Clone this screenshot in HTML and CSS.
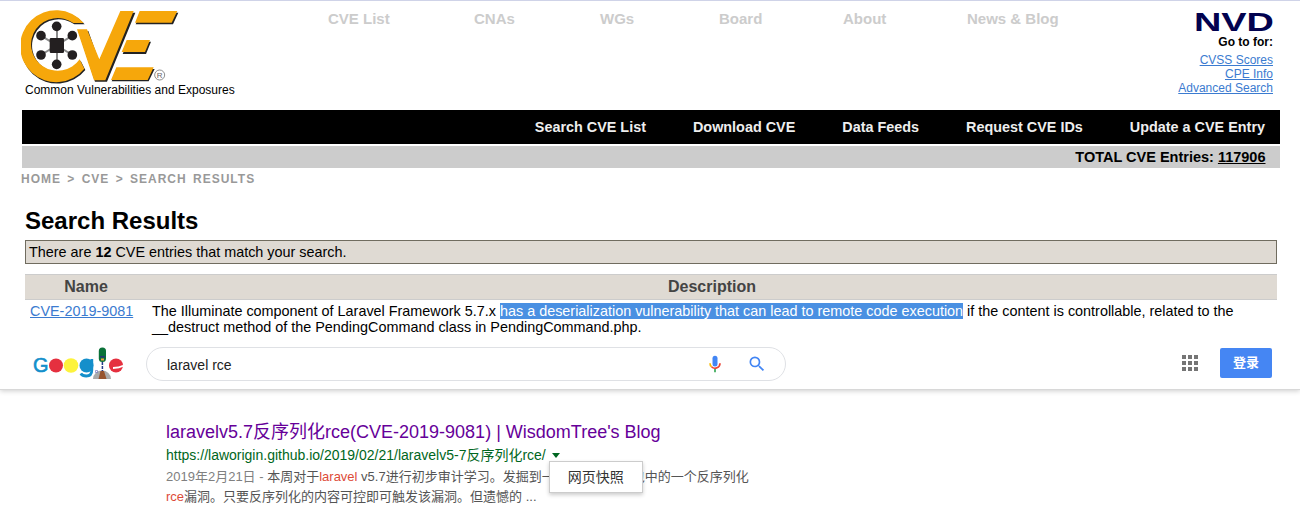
FILE: index.html
```html
<!DOCTYPE html>
<html lang="zh-CN">
<head>
<meta charset="utf-8">
<title>CVE Search Results</title>
<link rel="stylesheet" href="styles.css">
</head>
<body>
<header class="site-header">
  <div class="brand">
    <svg class="cve-logo" viewBox="18 24 474 228" role="img" aria-label="CVE">
      <path d="M205 69 A108 108 0 1 0 207 206 L193 178 A80 79 0 1 1 174 69Z" fill="#222" transform="translate(4 4)"/>
      <path d="M205 69 A108 108 0 1 0 207 206 L193 178 A80 79 0 1 1 174 69Z" fill="#f6a70b" transform="translate(1 0)"/>
      <path d="M168 78 L222 78 L253 178 L240 241 L228 241Z" fill="#fff"/>
      <path d="M190 93 L220 93 L252 184 L321 38 L361 38 L276 245 L240 245Z" fill="#222"/>
      <path d="M186 88 L216 88 L253 178 L316 33 L356 33 L271 241 L237 241Z" fill="#f6a70b"/>
      <path d="M378 38h112l-16 35H362zM338 125h70l-15 37h-70zM306 207h113l-18 37H290z" fill="#222"/>
      <path d="M374 33h113l-17 35H360zM335 120h70l-15 36h-70zM304 202h112l-18 38H288z" fill="#f6a70b"/>
      <g stroke="#8b8b8b" stroke-width="6"><path d="M126 80V192M78 107L172 165M172 107L78 165"/></g>
      <g fill="#231f20"><rect x="104" y="114" width="43" height="45" rx="4"/><circle cx="125" cy="79" r="14.500"/><circle cx="78" cy="107" r="14.500"/><circle cx="172" cy="107" r="14.500"/><circle cx="78" cy="165" r="14.500"/><circle cx="172" cy="165" r="14.500"/><circle cx="125" cy="193" r="14.500"/></g>
      <circle cx="434" cy="225" r="15" fill="none" stroke="#777" stroke-width="2.500"/>
      <text class="registered" x="425" y="234">R</text>
    </svg>
    <div class="tagline">Common Vulnerabilities and Exposures</div>
  </div>
  <nav class="top-nav"><a>CVE List</a><a>CNAs</a><a>WGs</a><a>Board</a><a>About</a><a>News &amp; Blog</a></nav>
  <aside class="nvd">
    <svg class="nvd-logo" viewBox="0 0 80 20"><text class="nvd-word" x="1" y="19" textLength="80" lengthAdjust="spacingAndGlyphs">NVD</text></svg>
    <strong>Go to for:</strong>
    <a>CVSS Scores</a><a>CPE Info</a><a>Advanced Search</a>
  </aside>
</header>
<nav class="main-nav"><a>Search CVE List</a><a>Download CVE</a><a>Data Feeds</a><a>Request CVE IDs</a><a>Update a CVE Entry</a></nav>
<div class="total">TOTAL CVE Entries:&nbsp;<u>117906</u></div>
<div class="crumbs">HOME &gt; CVE &gt; SEARCH RESULTS</div>
<main class="results">
  <h1>Search Results</h1>
  <div class="count">There are <b>12</b> CVE entries that match your search.</div>
  <div class="row head"><span>Name</span><span>Description</span></div>
  <div class="row entry"><a>CVE-2019-9081</a><p>The Illuminate component of Laravel Framework 5.7.x <mark>has a deserialization vulnerability that can lead to remote code execution</mark> if the content is controllable, related to the<br>__destruct method of the PendingCommand class in PendingCommand.php.</p></div>
</main>
<section class="search-bar">
  <svg class="doodle" viewBox="0 0 96 36" role="img" aria-label="Google">
    <text class="letter" x="3" y="25" textLength="15.500" lengthAdjust="spacingAndGlyphs">G</text>
    <circle cx="26" cy="18.500" r="7" fill="#e5303f"/><circle cx="41" cy="18.500" r="7.300" fill="#fdf33c"/>
    <circle cx="56.500" cy="18.500" r="7" fill="#148fcb"/><path d="M61.800 12v11q0 6-5.500 6-4 0-5.500-2.500" fill="none" stroke="#148fcb" stroke-width="2.800"/>
    <path d="M63 32a9 8.500 0 0 1 18 0z" fill="#aaa"/><path d="M70.500 24h3.500l2.500 8h-8z" fill="#97532d"/>
    <rect x="68.800" y=".5" width="7.200" height="14.500" rx="3.500" fill="#0a7138"/><path d="M72.400 15v9" stroke="#243b88" stroke-width="1.500" stroke-dasharray="3 1"/><path d="M70 9h5v1.500h-5z" fill="#263774"/><path d="M71 11.500h3v2h-3z" fill="#f2a23b"/><path d="M65.500 23.500h2v2h-2z" fill="none" stroke="#7776bc" stroke-width=".7"/>
    <circle cx="86" cy="18.500" r="7" fill="#e5303f"/><path d="M83 21q6 0 11-2.500" fill="none" stroke="#fff" stroke-width="1.800"/>
  </svg>
  <div class="search-box">
    <span>laravel rce</span>
    <svg class="mic" viewBox="0 0 24 24"><rect x="9" y="2" width="6" height="13" rx="3" fill="#4285f4"/><path d="M6 11a6 6 0 0 0 1.800 4.300" stroke="#fbbc05"/><path d="M7.800 15.300A6 6 0 0 0 18 11" stroke="#ea4335"/><path d="M12 18v4" stroke="#34a853"/></svg>
    <svg class="lens" viewBox="0 0 24 24"><path d="M15.500 14h-.79l-.28-.27A6.471 6.471 0 0 0 16 9.500 6.500 6.500 0 1 0 9.500 16c1.610 0 3.090-.59 4.230-1.570l.27.280v.79l5 4.990L20.490 19zM9.500 14C7.010 14 5 11.990 5 9.500S7.010 5 9.500 5 14 7.010 14 9.500 11.990 14 9.500 14z" fill="#4285f4"/></svg>
  </div>
  <svg class="apps" viewBox="0 0 16 16" fill="#757575"><path d="M0 0h4v4H0zM6 0h4v4H6zM12 0h4v4h-4zM0 6h4v4H0zM6 6h4v4H6zM12 6h4v4h-4zM0 12h4v4H0zM6 12h4v4H6zM12 12h4v4h-4z"/></svg>
  <button class="login">登录</button>
</section>
<article class="hit">
  <h2>laravelv5.7反序列化rce(CVE-2019-9081) | WisdomTree's Blog</h2>
  <div class="url">https://laworigin.github.io/2019/02/21/laravelv5-7反序列化rce/<span class="menu-anchor"><i class="caret"></i><span class="menu">网页快照</span></span></div>
  <p class="snippet"><span class="date">2019年2月21日 - </span>本周对于<em>laravel</em> v5.7进行初步审计学习。发掘到一<span class="covered"></span>包中的一个反序列化<br><em>rce</em>漏洞。只要反序列化的内容可控即可触发该漏洞。但遗憾的 ...</p>
</article>
</body>
</html>
```
FILE: styles.css
```css
* { box-sizing: border-box; }
body { margin: 0; height: 507px; overflow: hidden; background: #fff; color: #000; font-family: "Liberation Sans", "Noto Sans CJK SC", sans-serif; }
.site-header { height: 110px; border-top: 1px solid #cfd3e8; display: flex; padding: 0 27px 0 21px; }
.brand { width: 307px; padding-top: 7px; }
.cve-logo { display: block; width: 158px; height: 76px; }
.registered { font-size: 24px; fill: #666; }
.tagline { font-size: 12px; line-height: 14px; margin: -1px 0 0 4px; }
.top-nav { display: grid; grid-template-columns: 146px 126px 119px 124px 124px auto; align-content: start; padding-top: 9px; font-size: 15px; line-height: 18px; font-weight: bold; color: #ccc; }
.nvd { margin-left: auto; display: flex; flex-direction: column; align-items: flex-end; font-size: 12px; line-height: 14px; padding-top: 11px; }
.nvd-logo { width: 80px; height: 20px; overflow: visible; }
.nvd-word { font-size: 25px; line-height: 20px; font-weight: bold; fill: #02024f; }
.nvd strong { margin: 3px 0 4px; }
.nvd a { color: #3b7bd0; text-decoration: underline; }
.main-nav { height: 34px; margin: 0 20px 2px 22px; padding-right: 15px; display: flex; align-items: center; justify-content: flex-end; gap: 47px; background: #000; color: #eee; font-size: 14.4px; font-weight: bold; }
.total { height: 22px; margin: 0 20px 0 22px; padding-right: 14.5px; display: flex; align-items: center; justify-content: flex-end; background: #ccc; font-size: 14.5px; font-weight: bold; }
.crumbs { height: 22px; padding-left: 21px; font-size: 12px; line-height: 22px; font-weight: bold; letter-spacing: 1px; word-spacing: 2px; color: #999; }
.results { padding: 0 23px 0 25px; height: 153px; }
h1 { margin: 0; height: 50px; padding-top: 17px; font-size: 24px; line-height: 28px; }
.count { height: 24px; border: 1px solid #706c5f; background: #dfdad3; padding-left: 3px; font-size: 14.4px; line-height: 22px; margin-bottom: 10px; }
.row { display: grid; grid-template-columns: 122px 1fr; }
.head { height: 26px; background: #dfdad3; border: solid #ccc; border-width: 1px 0; text-align: center; font-size: 16px; line-height: 23px; font-weight: bold; color: #444; }
.entry { padding: 3px 0 0 5px; font-size: 14.4px; line-height: 16px; }
.entry a { color: #3b7bd0; text-decoration: underline; }
.entry p { margin: 0; white-space: nowrap; }
mark { background: #4a90e2; color: #fff; }
.search-bar { height: 47px; border-bottom: 1px solid #d8d8d8; box-shadow: 0 1px 5px #0003; clip-path: inset(0 0 -8px 0); display: flex; padding: 4px 28px 0 30px; }
.doodle { width: 96px; height: 36px; }
.letter { font-size: 20px; fill: #148fcb; stroke: #148fcb; stroke-width: .6px; }
.search-box { margin-left: 20px; width: 640px; height: 34px; border: 1px solid #dfe1e5; border-radius: 17px; display: flex; align-items: center; padding: 0 18px 0 20px; font-size: 14px; color: #222; }
.search-box span { padding-top: 2px; }
.mic { width: 20px; height: 20px; margin-left: auto; margin-right: 22px; fill: none; stroke-width: 2; }
.lens { width: 20px; height: 20px; }
.apps { width: 16px; height: 16px; margin: 8px 22px 0 auto; }
.login { width: 52px; height: 30px; margin-top: 1px; border: 0; border-radius: 2px; padding: 0 0 3px; background: #4586f3; color: #fff; font: bold 13px "Liberation Sans", "Noto Sans CJK SC", sans-serif; }
.hit { padding: 31px 0 0 166px; }
h2 { margin: 0; font-size: 18px; line-height: 22px; font-weight: normal; color: #609; }
.url { display: flex; align-items: center; font-size: 14px; line-height: 20px; height: 20px; margin-top: 2px; color: #006621; }
.menu-anchor { position: relative; display: inline-flex; margin-left: 6px; }
.caret { border: solid transparent; border-width: 5px 4px 0; border-top-color: #006621; }
.menu { position: absolute; left: -3px; top: 8px; width: 94px; height: 32px; background: #fff; border: 1px solid #ccc; box-shadow: 0 2px 4px #0003; padding-left: 18px; line-height: 30px; color: #333; }
.snippet { margin: 2px 0 0; font-size: 13px; line-height: 20px; color: #545454; white-space: nowrap; }
.date { color: #808080; }
.covered { display: inline-block; width: 77px; }
.snippet em { font-style: normal; color: #dd4b39; }
```
